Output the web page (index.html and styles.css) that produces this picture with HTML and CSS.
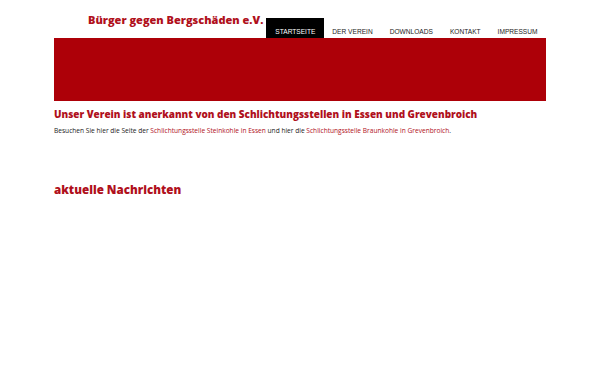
FILE: index.html
```html
<!DOCTYPE html>
<html lang="de">
<head>
<meta charset="utf-8">
<title>Bürger gegen Bergschäden e.V.</title>
<link rel="stylesheet" href="styles.css">
</head>
<body>
<div class="page">
  <header class="header">
    <div class="brand">Bürger gegen Bergschäden e.V.</div>
    <nav class="nav">
      <a class="nav-item active" href="#">Startseite</a>
      <a class="nav-item" href="#">Der Verein</a>
      <a class="nav-item" href="#">Downloads</a>
      <a class="nav-item" href="#">Kontakt</a>
      <a class="nav-item" href="#">Impressum</a>
    </nav>
  </header>
  <div class="banner"></div>
  <main class="content">
    <h2 class="headline">Unser Verein ist anerkannt von den Schlichtungsstellen in Essen und Grevenbroich</h2>
    <p class="text">Besuchen Sie hier die Seite der <a href="#">Schlichtungsstelle Steinkohle in Essen</a> und hier die <a href="#">Schlichtungsstelle Braunkohle in Grevenbroich</a>.</p>
    <h2 class="news">aktuelle Nachrichten</h2>
  </main>
</div>
</body>
</html>
```
FILE: styles.css
```css
* { box-sizing: border-box; }
html, body { margin: 0; padding: 0; background: #fff; }
body { font-family: "Open Sans", sans-serif; color: #222; }
.page { margin: 0 54px; }
.header { display: flex; align-items: flex-end; height: 38px; }
.brand {
  flex: 0 0 212px;
  font-family: "Open Sans", sans-serif;
  font-weight: 800;
  font-size: 11px;
  color: #b0101c;
  padding-left: 34px;
  align-self: flex-start;
  margin-top: 12px;
  white-space: nowrap;
}
.nav { display: flex; margin-left: auto; }
.nav-item {
  font-family: "Liberation Sans", Arial, sans-serif;
  font-size: 6.6px;
  text-transform: uppercase;
  color: #222;
  text-decoration: none;
  white-space: nowrap;
  padding: 8px 8.5px 0;
  height: 20px;
  line-height: 12px;
  display: block;
}
.nav-item:first-child { padding-left: 9px; }
.nav-item.active { background: #000; color: #fff; }
.banner { background: #ad0008; height: 63px; }
.content { padding-top: 6px; }
.headline {
  margin: 0;
  font-family: "Open Sans", sans-serif;
  font-weight: 800;
  font-size: 9.95px;
  color: #b0101c;
  line-height: 14px;
}
.text {
  margin: 5px 0 0;
  font-size: 6.6px;
  line-height: 9px;
  color: #222;
}
.text a { color: #b0101c; text-decoration: none; }
.news {
  margin: 47px 0 0;
  font-family: "Open Sans", sans-serif;
  font-weight: 800;
  font-size: 11.6px;
  color: #b0101c;
  line-height: 16px;
}
```
